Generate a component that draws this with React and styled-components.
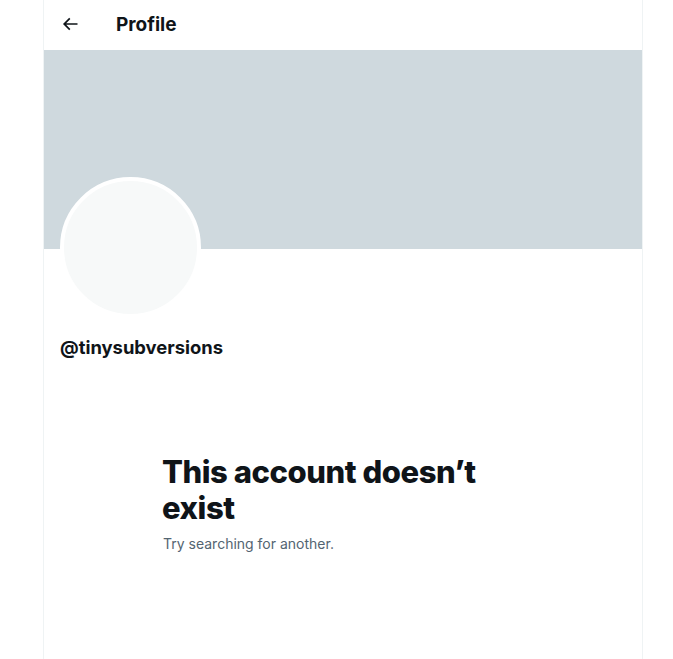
import React from "react";
import styled, { createGlobalStyle } from "styled-components";

const Global = createGlobalStyle`
  html, body { margin: 0; padding: 0; background: #fff; }
  body { font-family: Inter, "Liberation Sans", Arial, sans-serif; color: #0f1419; }
`;

const Page = styled.div`
  display: flex;
  justify-content: flex-start;
  padding-left: 43px;
  min-height: 100vh;
`;

const Column = styled.main`
  width: 598px;
  min-height: 100vh;
  border-left: 1px solid #eff3f4;
  border-right: 1px solid #eff3f4;
  display: flex;
  flex-direction: column;
`;

const Header = styled.header`
  height: 50px;
  display: flex;
  align-items: center;
  padding: 0 16px;
  gap: 36px;
`;

const BackButton = styled.button`
  width: 20px;
  height: 20px;
  margin-top: -2px;
  padding: 0;
  border: 0;
  background: none;
  display: flex;
  align-items: center;
  justify-content: center;
  color: #0f1419;
  svg { width: 20px; height: 20px; fill: currentColor; }
`;

const Title = styled.h2`
  margin: 0;
  font-size: 19px;
  font-weight: 700;
  line-height: 24px;
`;

const Banner = styled.div`
  height: 199px;
  background: #cfd9de;
`;

const ProfileArea = styled.section`
  padding: 0 16px;
  display: flex;
  flex-direction: column;
`;

const Avatar = styled.div`
  width: 133px;
  height: 133px;
  margin-top: -72px;
  border: 4px solid #fff;
  border-radius: 50%;
  background: #f7f9f9;
`;

const Handle = styled.div`
  margin-top: 19px;
  font-size: 18.4px;
  font-weight: 700;
  line-height: 20px;
`;

const Empty = styled.div`
  margin: 97px auto 0;
  width: 360px;
  padding: 0 20px;
`;

const EmptyTitle = styled.h1`
  margin: 0 0 0 -1px;
  font-size: 31px;
  font-weight: 800;
  line-height: 36px;
  letter-spacing: -0.45px;
`;

const EmptyText = styled.p`
  margin: 8px 0 0;
  font-size: 14px;
  line-height: 20px;
  color: #536471;
`;

export default function App() {
  return (
    <>
      <Global />
      <Page>
        <Column>
          <Header>
            <BackButton aria-label="Back">
              <svg viewBox="0 0 24 24">
                <path d="M7.414 13l5.043 5.04-1.414 1.42L3.586 12l7.457-7.46 1.414 1.42L7.414 11H21v2H7.414z" />
              </svg>
            </BackButton>
            <Title>Profile</Title>
          </Header>
          <Banner />
          <ProfileArea>
            <Avatar />
            <Handle>@tinysubversions</Handle>
          </ProfileArea>
          <Empty>
            <EmptyTitle>This account doesn’t exist</EmptyTitle>
            <EmptyText>Try searching for another.</EmptyText>
          </Empty>
        </Column>
      </Page>
    </>
  );
}
